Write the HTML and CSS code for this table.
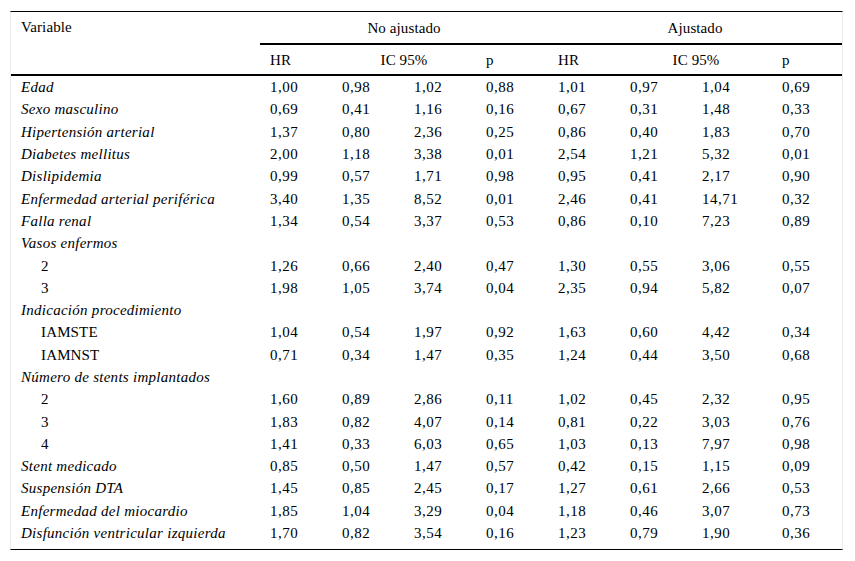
FILE: index.html
```html
<!DOCTYPE html>
<html lang="es">
<head>
<meta charset="utf-8">
<title>Tabla</title>
<link rel="stylesheet" href="styles.css">
</head>
<body>
<table class="data">
  <colgroup>
    <col class="c-var"><col class="c-n"><col class="c-n"><col class="c-n"><col class="c-n"><col class="c-n"><col class="c-n"><col class="c-w"><col class="c-last">
  </colgroup>
  <thead>
    <tr class="h1">
      <th class="var" rowspan="2">Variable</th>
      <th class="grp" colspan="4">No ajustado</th>
      <th class="grp" colspan="4">Ajustado</th>
    </tr>
    <tr class="h2">
      <th>HR</th><th class="ctr" colspan="2">IC 95%</th><th>p</th>
      <th>HR</th><th class="ctr" colspan="2">IC 95%</th><th>p</th>
    </tr>
  </thead>
  <tbody>
    <tr><td class="v">Edad</td><td>1,00</td><td>0,98</td><td>1,02</td><td>0,88</td><td>1,01</td><td>0,97</td><td>1,04</td><td>0,69</td></tr>
    <tr><td class="v">Sexo masculino</td><td>0,69</td><td>0,41</td><td>1,16</td><td>0,16</td><td>0,67</td><td>0,31</td><td>1,48</td><td>0,33</td></tr>
    <tr><td class="v">Hipertensión arterial</td><td>1,37</td><td>0,80</td><td>2,36</td><td>0,25</td><td>0,86</td><td>0,40</td><td>1,83</td><td>0,70</td></tr>
    <tr><td class="v">Diabetes mellitus</td><td>2,00</td><td>1,18</td><td>3,38</td><td>0,01</td><td>2,54</td><td>1,21</td><td>5,32</td><td>0,01</td></tr>
    <tr><td class="v">Dislipidemia</td><td>0,99</td><td>0,57</td><td>1,71</td><td>0,98</td><td>0,95</td><td>0,41</td><td>2,17</td><td>0,90</td></tr>
    <tr><td class="v">Enfermedad arterial periférica</td><td>3,40</td><td>1,35</td><td>8,52</td><td>0,01</td><td>2,46</td><td>0,41</td><td>14,71</td><td>0,32</td></tr>
    <tr><td class="v">Falla renal</td><td>1,34</td><td>0,54</td><td>3,37</td><td>0,53</td><td>0,86</td><td>0,10</td><td>7,23</td><td>0,89</td></tr>
    <tr><td class="v" colspan="9">Vasos enfermos</td></tr>
    <tr><td class="sub">2</td><td>1,26</td><td>0,66</td><td>2,40</td><td>0,47</td><td>1,30</td><td>0,55</td><td>3,06</td><td>0,55</td></tr>
    <tr><td class="sub">3</td><td>1,98</td><td>1,05</td><td>3,74</td><td>0,04</td><td>2,35</td><td>0,94</td><td>5,82</td><td>0,07</td></tr>
    <tr><td class="v" colspan="9">Indicación procedimiento</td></tr>
    <tr><td class="sub">IAMSTE</td><td>1,04</td><td>0,54</td><td>1,97</td><td>0,92</td><td>1,63</td><td>0,60</td><td>4,42</td><td>0,34</td></tr>
    <tr><td class="sub">IAMNST</td><td>0,71</td><td>0,34</td><td>1,47</td><td>0,35</td><td>1,24</td><td>0,44</td><td>3,50</td><td>0,68</td></tr>
    <tr><td class="v" colspan="9">Número de stents implantados</td></tr>
    <tr><td class="sub">2</td><td>1,60</td><td>0,89</td><td>2,86</td><td>0,11</td><td>1,02</td><td>0,45</td><td>2,32</td><td>0,95</td></tr>
    <tr><td class="sub">3</td><td>1,83</td><td>0,82</td><td>4,07</td><td>0,14</td><td>0,81</td><td>0,22</td><td>3,03</td><td>0,76</td></tr>
    <tr><td class="sub">4</td><td>1,41</td><td>0,33</td><td>6,03</td><td>0,65</td><td>1,03</td><td>0,13</td><td>7,97</td><td>0,98</td></tr>
    <tr><td class="v">Stent medicado</td><td>0,85</td><td>0,50</td><td>1,47</td><td>0,57</td><td>0,42</td><td>0,15</td><td>1,15</td><td>0,09</td></tr>
    <tr><td class="v">Suspensión DTA</td><td>1,45</td><td>0,85</td><td>2,45</td><td>0,17</td><td>1,27</td><td>0,61</td><td>2,66</td><td>0,53</td></tr>
    <tr><td class="v">Enfermedad del miocardio</td><td>1,85</td><td>1,04</td><td>3,29</td><td>0,04</td><td>1,18</td><td>0,46</td><td>3,07</td><td>0,73</td></tr>
    <tr class="last"><td class="v">Disfunción ventricular izquierda</td><td>1,70</td><td>0,82</td><td>3,54</td><td>0,16</td><td>1,23</td><td>0,79</td><td>1,90</td><td>0,36</td></tr>
  </tbody>
</table>
</body>
</html>
```

FILE: styles.css
```css
html, body {
  margin: 0;
  padding: 0;
  background: #ffffff;
}

body {
  padding: 11px 12px 0 10px;
  font-family: "Liberation Serif", "Times New Roman", serif;
  font-size: 15px;
  color: #000;
}

.data {
  table-layout: fixed;
  width: 833px;
  border-collapse: separate;
  border-spacing: 0;
  border-left: 1px solid #ececec;
  border-right: 1px solid #ececec;
  border-top: 1px solid #000;
  border-bottom: 1px solid #000;
  font-family: inherit;
  font-size: inherit;
}

.c-var { width: 249px; }
.c-n { width: 72px; }
.c-w { width: 80px; }
.c-last { width: 70px; }

th, td {
  padding: 0 0 0 10px;
  text-align: left;
  font-weight: normal;
  white-space: nowrap;
  vertical-align: middle;
  letter-spacing: 0.5px;
}

th {
  letter-spacing: 0.1px;
}

.h1 th {
  height: 31px;
  line-height: 16px;
}

.h1 th.var {
  vertical-align: top;
  padding-top: 7px;
  height: auto;
  border-bottom: 2px solid #000;
}

.h1 th.grp {
  text-align: center;
  padding-left: 0;
  border-bottom: 2px solid #000;
}

.h2 th {
  height: 29px;
  line-height: 16px;
  border-bottom: 2px solid #000;
}

.h2 th.ctr {
  text-align: center;
  padding-left: 0;
}

tbody td {
  height: 22.3px;
  line-height: 16px;
}

td.v {
  font-style: italic;
  letter-spacing: 0.27px;
}

td.sub {
  padding-left: 30px;
  letter-spacing: 0.15px;
}

tr.last td {
  height: 22.3px;
  padding-bottom: 5px;
}
```
